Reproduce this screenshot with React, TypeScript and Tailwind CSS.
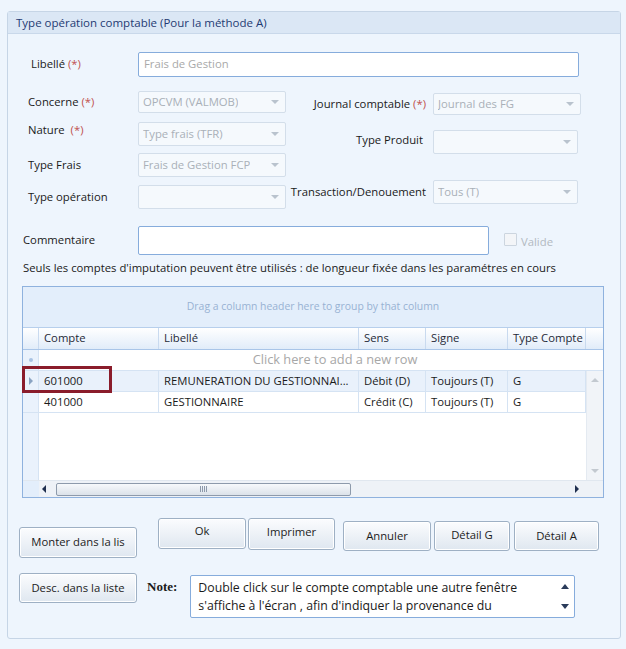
import React from 'react'

const font = "font-['Open_Sans',sans-serif]"

function Arrow({ className = 'border-t-[#b9c3ce]' }: { className?: string }) {
  return <span className={`block w-0 h-0 border-l-[4px] border-r-[4px] border-t-[4px] border-l-transparent border-r-transparent ${className}`} />
}

function Select({ className, value }: { className: string; value?: string }) {
  return (
    <div className={`flex items-center justify-between border border-[#d3deea] rounded-[2px] bg-[#f5f9fd] pl-[4px] pr-[6px] text-[#a9b0b8] ${className}`}>
      <span className="truncate">{value}</span>
      <Arrow />
    </div>
  )
}

function Req() {
  return <span className="text-[#c0504d]">(*)</span>
}

function Btn({ className, children }: { className: string; children: React.ReactNode }) {
  return (
    <button
      type="button"
      className={`flex items-center justify-center border border-[#9eb0c4] rounded-[3px] bg-gradient-to-b from-[#fbfcfe] to-[#dfe7f0] text-[#1c1c1c] shadow-[inset_0_0_0_1px_#ffffff] ${className}`}
    >
      {children}
    </button>
  )
}

const cols = [
  { name: 'Compte', w: 'w-[120px]' },
  { name: 'Libellé', w: 'w-[200px]' },
  { name: 'Sens', w: 'w-[67px]' },
  { name: 'Signe', w: 'w-[82px]' },
  { name: 'Type Compte', w: 'w-[78px]' },
]

const rows = [
  ['601000', 'REMUNERATION DU GESTIONNAI...', 'Débit (D)', 'Toujours (T)', 'G'],
  ['401000', 'GESTIONNAIRE', 'Crédit (C)', 'Toujours (T)', 'G'],
]

function Grid() {
  return (
    <div className="relative ml-[14px] mt-[10px] w-[582px] h-[212px] border border-[#8fb2de] bg-white flex flex-col">
      {/* group panel */}
      <div className="h-[41px] shrink-0 bg-[#e3eefb] border-b border-[#b7cfec] flex items-center justify-center text-[10.4px] text-[#98b2d3]">
        Drag a column header here to group by that column
      </div>
      {/* header */}
      <div className="h-[22px] shrink-0 flex bg-gradient-to-b from-[#ffffff] to-[#e1ecf9] border-b border-[#a9c5e8] text-[#1f2a38]">
        <div className="w-[16px] border-r border-[#c9daef]" />
        {cols.map((c) => (
          <div key={c.name} className={`${c.w} border-r border-[#c9daef] pl-[5px] flex items-center whitespace-nowrap`}>
            {c.name}
          </div>
        ))}
        <div className="flex-1" />
      </div>
      {/* new row */}
      <div className="h-[21px] shrink-0 flex border-b border-[#d5e3f3]">
        <div className="w-[16px] bg-[#eaf2fc] border-r border-[#d5e3f3] flex items-center justify-center">
          <span className="w-[4px] h-[4px] rounded-full bg-[#a9c3e3]" />
        </div>
        <div className="flex-1 flex items-center justify-center pl-[28px] text-[12.8px] text-[#a7a7a7]">Click here to add a new row</div>
      </div>
      <div className="flex flex-1 min-h-0">
        <div className="flex-1 flex flex-col">
          {rows.map((r, i) => (
            <div key={r[0]} className={`h-[21px] flex border-b border-[#d5e3f3] text-[#1a1a1a] ${i === 0 ? 'bg-[#e9f1fb]' : 'bg-white'}`}>
              <div className="w-[16px] bg-[#eaf2fc] border-r border-[#d5e3f3] flex items-center justify-center">
                {i === 0 && <span className="block w-0 h-0 border-t-[4px] border-b-[4px] border-l-[4px] border-t-transparent border-b-transparent border-l-[#8aa3c2]" />}
              </div>
              {cols.map((c, j) => (
                <div key={c.name} className={`${c.w} border-r border-[#d5e3f3] pl-[5px] flex items-center whitespace-nowrap overflow-hidden`}>
                  {r[j]}
                </div>
              ))}
            </div>
          ))}
          <div className="flex-1 flex">
            <div className="w-[16px] bg-[#eaf2fc] border-r border-[#d5e3f3]" />
          </div>
        </div>
        {/* vertical scrollbar */}
        <div className="w-[17px] bg-[#f1f4f8] border-l border-[#e4eaf1] flex flex-col items-center justify-between py-[7px]">
          <span className="block w-0 h-0 border-l-[4px] border-r-[4px] border-b-[4px] border-l-transparent border-r-transparent border-b-[#c3c9d0]" />
          <span className="block w-0 h-0 border-l-[4px] border-r-[4px] border-t-[4px] border-l-transparent border-r-transparent border-t-[#c3c9d0]" />
        </div>
      </div>
      {/* horizontal scrollbar */}
      <div className="h-[17px] shrink-0 flex items-center bg-[#eef2f7] border-t border-[#e0e7ef]">
        <div className="w-[16px] h-full bg-[#e3eefb]" />
        <span className="ml-[3px] block w-0 h-0 border-t-[4px] border-b-[4px] border-r-[4px] border-t-transparent border-b-transparent border-r-[#1f2f4f]" />
        <div className="ml-[10px] w-[295px] h-[13px] rounded-[2px] border border-[#8d9aab] bg-gradient-to-b from-[#f7f9fb] to-[#dbe2ea] flex items-center justify-center gap-[1px]">
          <span className="w-[1px] h-[6px] bg-[#8d9aab]" />
          <span className="w-[1px] h-[6px] bg-[#8d9aab]" />
          <span className="w-[1px] h-[6px] bg-[#8d9aab]" />
          <span className="w-[1px] h-[6px] bg-[#8d9aab]" />
        </div>
        <div className="flex-1" />
        <span className="mr-[24px] block w-0 h-0 border-t-[4px] border-b-[4px] border-l-[4px] border-t-transparent border-b-transparent border-l-[#1f2f4f]" />
      </div>
      {/* highlight */}
      <div className="absolute left-[-1px] top-[79px] w-[90px] h-[27px] border-[3px] border-[#8a1c2b]" />
    </div>
  )
}

export default function App() {
  return (
    <div className={`w-[626px] h-[649px] bg-[#eef5fd] pt-[11px] text-[11.3px] ${font}`}>
      <div className="ml-[7px] w-[614px] h-[628px] border border-[#c6d5e6] rounded-[3px] bg-[#eef5fd]">
        <div className="h-[22px] bg-[#dbe7f5] border-b border-[#c9d8ea] pl-[8px] flex items-center text-[#1f3b73] text-[11.5px]">
          Type opération comptable (Pour la méthode A)
        </div>

        {/* Libellé */}
        <div className="mt-[18px] pl-[23px] flex items-center">
          <div className="w-[107px] text-[#1a1a1a]">
            Libellé <Req />
          </div>
          <div className="w-[441px] h-[25px] border border-[#86acdc] rounded-[2px] bg-white pl-[5px] flex items-center text-[#a9a9a9]">
            Frais de Gestion
          </div>
        </div>

        {/* two columns */}
        <div className="mt-[14px] flex text-[#1a1a1a]">
          <div className="pl-[20px] flex flex-col">
            <div className="flex items-center h-[22px]">
              <div className="w-[110px]">Concerne <Req /></div>
              <Select className="w-[148px] h-[22px]" value="OPCVM (VALMOB)" />
            </div>
            <div className="flex items-center mt-[9px] h-[24px]">
              <div className="w-[110px] -mt-[7px]">Nature&nbsp; <Req /></div>
              <Select className="w-[148px] h-[24px]" value="Type frais (TFR)" />
            </div>
            <div className="flex items-center mt-[7px] h-[24px]">
              <div className="w-[110px]">Type Frais</div>
              <Select className="w-[148px] h-[24px]" value="Frais de Gestion FCP" />
            </div>
            <div className="flex items-center mt-[8px] h-[24px]">
              <div className="w-[110px]">Type opération</div>
              <Select className="w-[148px] h-[24px]" />
            </div>
          </div>
          <div className="ml-[4px] flex flex-col">
            <div className="flex items-center mt-[2px] h-[22px]">
              <div className="w-[136px] text-right">Journal comptable <Req /></div>
              <Select className="ml-[7px] w-[148px] h-[22px]" value="Journal des FG" />
            </div>
            <div className="flex items-center mt-[15px] h-[24px]">
              <div className="w-[133px] text-right -mt-[3px]">Type Produit</div>
              <Select className="ml-[10px] w-[145px] h-[24px]" />
            </div>
            <div className="flex items-center mt-[26px] h-[24px]">
              <div className="w-[136px] text-right">Transaction/Denouement</div>
              <Select className="ml-[7px] w-[145px] h-[24px]" value="Tous (T)" />
            </div>
          </div>
        </div>

        {/* Commentaire */}
        <div className="mt-[17px] pl-[15px] flex items-center text-[#1a1a1a]">
          <div className="w-[115px]">Commentaire</div>
          <div className="w-[351px] h-[29px] border border-[#86acdc] rounded-[2px] bg-white" />
          <div className="ml-[15px] flex items-center -mt-[2px]">
            <span className="w-[13px] h-[13px] border border-[#ccd5df] bg-[#f3f5f8] rounded-[1px]" />
            <span className="ml-[4px] mt-[6px] text-[#b2b9c1]">Valide</span>
          </div>
        </div>

        <div className="mt-[5px] pl-[15px] h-[16px] leading-[16px] text-[#1a1a1a]">
          Seuls les comptes d'imputation peuvent être utilisés : de longueur fixée dans les paramétres en cours
        </div>

        <Grid />

        {/* buttons row 1 */}
        <div className="mt-[20px] flex items-start pl-[11px]">
          <Btn className="mt-[9px] w-[118px] h-[31px]">Monter dans la lis</Btn>
          <Btn className="ml-[21px] w-[88px] h-[31px] pb-[4px]">Ok</Btn>
          <Btn className="ml-[2px] w-[87px] h-[32px] pb-[3px]">Imprimer</Btn>
          <Btn className="ml-[8px] mt-[3px] w-[88px] h-[30px]">Annuler</Btn>
          <Btn className="ml-[3px] mt-[3px] w-[76px] h-[30px] pb-[2px]">Détail G</Btn>
          <Btn className="ml-[4px] mt-[3px] w-[85px] h-[30px]">Détail A</Btn>
        </div>

        {/* buttons row 2 */}
        <div className="mt-[15px] flex items-start pl-[11px]">
          <Btn className="w-[118px] h-[30px]">Desc. dans la liste</Btn>
          <div className="ml-[10px] mt-[4px] font-['Liberation_Serif',serif] font-bold text-[13px] text-[#1a1a1a]">Note:</div>
          <div className="ml-[13px] mt-[2px] w-[385px] h-[43px] border border-[#86acdc] rounded-[2px] bg-white flex">
            <div className="flex-1 pl-[7px] pt-[3px] text-[12.3px] leading-[18px] text-[#1a1a1a] overflow-hidden">
              Double click sur le compte comptable une autre fenêtre s'affiche à l'écran , afin d'indiquer la provenance du
            </div>
            <div className="w-[18px] flex flex-col items-center justify-between py-[8px]">
              <span className="block w-0 h-0 border-l-[4px] border-r-[4px] border-b-[5px] border-l-transparent border-r-transparent border-b-[#2a3b5a]" />
              <span className="block w-0 h-0 border-l-[4px] border-r-[4px] border-t-[5px] border-l-transparent border-r-transparent border-t-[#2a3b5a]" />
            </div>
          </div>
        </div>
      </div>
    </div>
  )
}
